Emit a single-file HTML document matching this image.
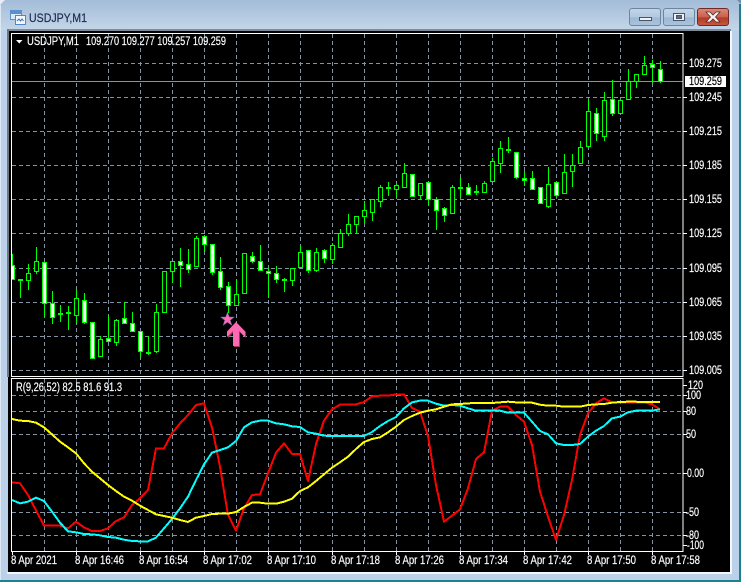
<!DOCTYPE html>
<html>
<head>
<meta charset="utf-8">
<title>USDJPY,M1</title>
<style>
html,body{margin:0;padding:0;width:741px;height:582px;overflow:hidden;background:#bad1e9}
svg{display:block;position:absolute;left:0;top:0}
text{font-family:"Liberation Sans",sans-serif;font-size:11.5px;fill:#fff;stroke:#fff;stroke-width:.18}
.g{fill:none;stroke:#8492a3;stroke-width:1;stroke-dasharray:4 3;shape-rendering:crispEdges}
.w{stroke:#fff;stroke-width:1;fill:none;shape-rendering:crispEdges}
.l{fill:none;stroke-width:2;stroke-linejoin:round;vector-effect:non-scaling-stroke;shape-rendering:crispEdges}
</style>
</head>
<body>
<svg width="741" height="582" viewBox="0 0 741 582" xmlns="http://www.w3.org/2000/svg">
<defs>
<linearGradient id="tb" x1="0" y1="0" x2="0" y2="1"><stop offset="0" stop-color="#a3bcd8"/><stop offset="1" stop-color="#c4d6e8"/></linearGradient>
<linearGradient id="bt" x1="0" y1="0" x2="0" y2="1"><stop offset="0" stop-color="#c3d6e8"/><stop offset=".5" stop-color="#b2c9e0"/><stop offset=".55" stop-color="#9db8d4"/><stop offset="1" stop-color="#aac4de"/></linearGradient>
<linearGradient id="rd" x1="0" y1="0" x2="0" y2="1"><stop offset="0" stop-color="#dc8a78"/><stop offset=".5" stop-color="#c8604c"/><stop offset=".55" stop-color="#b23a26"/><stop offset="1" stop-color="#c45a42"/></linearGradient>
</defs>
<!-- frame -->
<rect x="0" y="0" width="741" height="582" fill="#bad1e9"/>
<rect x="0" y="0" width="741" height="30" fill="url(#tb)"/>
<path d="M0 0h5L0 5z" fill="#e8eef4"/>
<path d="M741 0h-4l4 4z" fill="#6f8fa0"/>
<rect x="0" y="5" width="1" height="577" fill="#dce8f3"/>
<rect x="739" y="4" width="2" height="578" fill="#1f7f8d"/>
<rect x="0" y="580" width="741" height="2" fill="#1f8190"/>
<rect x="7" y="29" width="724" height="2" fill="#7f8b98"/>
<rect x="7" y="29" width="2" height="348" fill="#6e7680"/>
<rect x="9" y="31" width="721" height="541" fill="#000"/>
<rect x="8" y="377" width="1" height="195" fill="#000"/>
<rect x="7" y="572" width="724" height="2" fill="#f4f7fa"/>
<rect x="730" y="31" width="2" height="543" fill="#f4f7fa"/>
<!-- icon -->
<rect x="10.5" y="10.5" width="11" height="9" fill="#dceaf8" stroke="#5c8fcf"/>
<rect x="10.5" y="10.5" width="11" height="3" fill="#5c8fcf" stroke="#5c8fcf"/>
<rect x="15.5" y="15.5" width="10" height="9" fill="#f2f7fc" stroke="#4f86cc"/>
<path d="M17 21l2-2 1.500 2 1.500-2 1.500 2" fill="none" stroke="#3a6fb8"/>
<!-- title -->
<text x="29" y="22" textLength="58" lengthAdjust="spacingAndGlyphs" style="font-size:12px;fill:#1e2a52;stroke:#1e2a52;stroke-width:.2">USDJPY,M1</text>
<!-- buttons -->
<rect x="629.500" y="8.500" width="31" height="17" rx="2.500" fill="url(#bt)" stroke="#6f859e"/>
<rect x="663.500" y="8.500" width="31" height="17" rx="2.500" fill="url(#bt)" stroke="#6f859e"/>
<rect x="697.500" y="8.500" width="31" height="17" rx="2.500" fill="url(#rd)" stroke="#6e2a2a"/>
<rect x="639.500" y="17.500" width="12" height="3" fill="#eef2f6" stroke="#4a5464"/>
<rect x="673.500" y="13.500" width="11" height="7" fill="#eef2f6" stroke="#4a5464"/>
<rect x="676.500" y="15.500" width="5" height="3" fill="#5d7186" stroke="#4a5464"/>
<path d="M706 12h4l3 3 3-3h4l-4.500 5 4.500 5h-4l-3-3-3 3h-4l4.500-5z" fill="#f2f2f2" stroke="#5e2a26" stroke-width=".8"/>
<!-- main grid -->
<path class="g" d="M12 63.500H683M12 97.500H683M12 131.500H683M12 165.500H683M12 199.500H683M12 233.500H683M12 268.500H683M12 302.500H683M12 336.500H683M12 370.500H683"/>
<path class="g" d="M44.500 34V376M76.500 34V376M108.500 34V376M140.500 34V376M172.500 34V376M204.500 34V376M236.500 34V376M268.500 34V376M300.500 34V376M332.500 34V376M364.500 34V376M396.500 34V376M428.500 34V376M460.500 34V376M492.500 34V376M524.500 34V376M556.500 34V376M588.500 34V376M620.500 34V376M652.500 34V376"/>
<rect x="12" y="81" width="671" height="1" fill="#8593a3"/>
<!-- wicks -->
<path fill="none" stroke="#00ff00" stroke-width="1" shape-rendering="crispEdges" d="M12.500 254V279M20.500 280V298M28.500 264V290M36.500 247V274M44.500 262V317M52.500 291V324M60.500 305V322M68.500 306V330M76.500 290V324M84.500 293V324M100.500 336V357M108.500 315V342M116.500 319V346M124.500 302V323M132.500 312V331M140.500 331V358M148.500 336V355M156.500 304V353M164.500 271V313M172.500 261V283M180.500 248V287M188.500 249V273M196.500 236V266M204.500 235V252M212.500 244V275M220.500 257V290M228.500 282V313M236.500 280V306M252.500 252V263M260.500 245V270M268.500 268V298M276.500 266V283M284.500 278V292M292.500 268V286M300.500 245V267M308.500 250V273M316.500 248V272M324.500 249V263M332.500 243V264M340.500 229V248M348.500 214V236M356.500 216V233M364.500 201V223M372.500 199V221M380.500 185V207M388.500 182V196M396.500 183V197M404.500 163V187M412.500 174V197M420.500 183V200M428.500 181V205M436.500 197V230M444.500 207V222M452.500 185V213M460.500 177V198M468.500 183V194M476.500 185V195M484.500 181V192M492.500 158V181M500.500 141V173M508.500 137V153M516.500 152V179M524.500 171V186M532.500 171V189M548.500 167V208M556.500 182V197M564.500 154V193M572.500 154V187M580.500 141V163M588.500 100V146M596.500 108V141M604.500 92V141M612.500 80V116M628.500 69V99M636.500 74V88M644.500 56V75M652.500 60V83M660.500 61V83"/>
<!-- doji -->
<path fill="none" stroke="#00ff00" stroke-width="2" shape-rendering="crispEdges" d="M18 280h5M58 314h5M66 313h5M146 353h5M282 280h5M386 188h5M458 188h5M474 192h5M506 150h5"/>
<!-- hollow bodies -->
<path fill="#000" stroke="#00ff00" stroke-width="1" shape-rendering="crispEdges" d="M26.500 273.500h4V280.500h-4zM34.500 261.500h4V271.500h-4zM74.500 298.500h4V315.500h-4zM98.500 339.500h4V356.500h-4zM114.500 320.500h4V342.500h-4zM154.500 312.500h4V351.500h-4zM162.500 271.500h4V312.500h-4zM170.500 261.500h4V271.500h-4zM194.500 238.500h4V266.500h-4zM234.500 294.500h4V305.500h-4zM242.500 253.500h4V293.500h-4zM290.500 268.500h4V280.500h-4zM298.500 252.500h4V267.500h-4zM314.500 252.500h4V270.500h-4zM330.500 245.500h4V259.500h-4zM338.500 233.500h4V247.500h-4zM346.500 224.500h4V233.500h-4zM354.500 216.500h4V224.500h-4zM362.500 210.500h4V216.500h-4zM370.500 199.500h4V212.500h-4zM378.500 187.500h4V201.500h-4zM394.500 185.500h4V189.500h-4zM402.500 173.500h4V187.500h-4zM418.500 183.500h4V195.500h-4zM450.500 187.500h4V213.500h-4zM482.500 183.500h4V192.500h-4zM490.500 161.500h4V181.500h-4zM498.500 148.500h4V163.500h-4zM546.500 184.500h4V206.500h-4zM562.500 172.500h4V193.500h-4zM570.500 165.500h4V171.500h-4zM578.500 147.500h4V163.500h-4zM586.500 111.500h4V146.500h-4zM602.500 100.500h4V136.500h-4zM618.500 100.500h4V113.500h-4zM626.500 81.500h4V99.500h-4zM634.500 74.500h4V81.500h-4zM642.500 65.500h4V74.500h-4z"/>
<!-- filled bodies -->
<path fill="#fff" stroke="#00ff00" stroke-width="1" shape-rendering="crispEdges" d="M10.500 265.500h4V279.500h-4zM42.500 262.500h4V303.500h-4zM50.500 303.500h4V317.500h-4zM82.500 300.500h4V322.500h-4zM90.500 322.500h4V358.500h-4zM106.500 338.500h4V341.500h-4zM122.500 318.500h4V323.500h-4zM130.500 323.500h4V331.500h-4zM138.500 331.500h4V351.500h-4zM178.500 261.500h4V265.500h-4zM186.500 264.500h4V269.500h-4zM202.500 236.500h4V244.500h-4zM210.500 244.500h4V272.500h-4zM218.500 271.500h4V287.500h-4zM226.500 286.500h4V305.500h-4zM250.500 256.500h4V261.500h-4zM258.500 261.500h4V270.500h-4zM266.500 271.500h4V273.500h-4zM274.500 273.500h4V279.500h-4zM306.500 250.500h4V270.500h-4zM322.500 250.500h4V258.500h-4zM410.500 174.500h4V196.500h-4zM426.500 182.500h4V199.500h-4zM434.500 199.500h4V210.500h-4zM442.500 208.500h4V215.500h-4zM466.500 187.500h4V194.500h-4zM514.500 152.500h4V177.500h-4zM522.500 178.500h4V180.500h-4zM530.500 178.500h4V189.500h-4zM538.500 187.500h4V203.500h-4zM554.500 182.500h4V195.500h-4zM594.500 113.500h4V133.500h-4zM610.500 99.500h4V113.500h-4zM650.500 64.500h4V67.500h-4zM658.500 69.500h4V81.500h-4z"/>
<rect x="9" y="31" width="2" height="346" fill="#000"/>
<!-- star + arrow -->
<polygon points="227.500,312 229.300,317 234.500,317 230.300,320.200 232,325.500 227.500,322.300 223,325.500 224.700,320.200 220.500,317 225.700,317" fill="#ff69b4" stroke="#5a5a9a" stroke-width=".5"/>
<polygon points="237,323 246,332 246,338 240,332 240,347 234,347 234,332 228,338 228,332" fill="#a3324f"/>
<polygon points="236,322 245,331.500 245,337 239,331 239,346 233,346 233,331 227,337 227,331.500" fill="#ff69b4"/>
<!-- sub grid -->
<path class="g" d="M12 395.500H683M12 411.500H683M12 434.500H683M12 473.500H683M12 512.500H683M12 535.500H683"/>
<path class="g" d="M44.500 379V551M76.500 379V551M108.500 379V551M140.500 379V551M172.500 379V551M204.500 379V551M236.500 379V551M268.500 379V551M300.500 379V551M332.500 379V551M364.500 379V551M396.500 379V551M428.500 379V551M460.500 379V551M492.500 379V551M524.500 379V551M556.500 379V551M588.500 379V551M620.500 379V551M652.500 379V551"/>
<!-- indicators -->
<g transform="translate(0,370) scale(1,0.33333)">
<polyline class="l" stroke="#ff0000" points="12,337 20,340 28,375 44,467 60,467 68,475 76,455 84,472 92,483 100,483 108,475 116,453 124,442 132,405 140,385 148,360 156,235 164,235 172,190 180,160 188,135 196,105 204,100 212,172 220,290 228,435 236,482 244,415 252,375 260,373 268,310 276,248 284,220 292,252 300,252 308,333 316,222 324,152 332,118 340,104 348,103 356,103 364,96 372,79 380,77 388,77 396,73 404,73 412,114 420,125 428,198 436,345 444,455 452,437 460,418 468,355 476,267 484,247 492,122 500,110 508,110 516,135 524,155 532,225 540,365 548,440 556,510 564,435 572,330 580,195 588,130 596,100 604,85 612,97 620,97 628,97 636,97 644,97 652,103 660,118"/>
<polyline class="l" stroke="#00ffff" points="12,390 20,400 28,395 36,383 44,393 52,425 60,458 68,484 76,487 84,492 92,493 100,496 108,501 116,503 124,509 132,513 140,514 148,514 156,503 164,475 172,447 180,415 188,380 196,330 204,283 212,248 220,240 228,232 236,213 244,172 252,157 260,152 268,152 276,160 284,163 292,169 300,171 308,187 316,191 324,197 332,198 340,198 348,198 356,198 364,198 372,186 380,168 388,153 396,141 404,115 412,97 420,92 428,92 436,101 444,107 452,105 460,107 468,115 476,122 484,122 492,122 500,122 508,128 516,128 524,128 532,155 540,183 548,193 556,220 564,225 572,225 580,222 588,200 596,182 604,168 612,145 620,140 628,127 636,122 644,122 652,122 660,118"/>
<polyline class="l" stroke="#ffff00" points="12,147 20,152 28,153 36,158 44,172 52,193 60,215 68,232 76,250 84,280 92,305 100,325 108,345 116,363 124,380 132,392 140,407 148,420 156,433 164,438 172,443 180,450 188,456 196,443 204,438 212,432 220,431 228,431 236,426 244,411 252,398 260,398 268,401 276,401 284,395 292,386 300,363 308,352 316,333 324,313 332,293 340,277 348,260 356,237 364,216 372,207 380,202 388,187 396,170 404,150 412,138 420,128 428,122 436,118 444,110 452,103 460,102 468,100 476,99 492,99 500,97 508,95 516,97 524,97 532,98 540,104 548,107 556,107 564,110 572,110 580,110 588,105 596,103 604,102 612,98 620,96 628,95 660,96"/>
</g>
<!-- borders -->
<rect class="w" x="11.500" y="33.500" width="671.500" height="343"/>
<rect class="w" x="11.500" y="378.500" width="671.500" height="173"/>
<!-- price ticks -->
<path class="w" d="M683 63.500h4M683 97.500h4M683 131.500h4M683 165.500h4M683 199.500h4M683 233.500h4M683 268.500h4M683 302.500h4M683 336.500h4M683 370.500h4M683 385.500h4M683 395.500h4M683 411.500h4M683 434.500h4M683 473.500h4M683 512.500h4M683 535.500h4M683 545.500h4"/>
<path class="w" d="M12.500 551v4M76.500 551v4M140.500 551v4M204.500 551v4M268.500 551v4M332.500 551v4M396.500 551v4M460.500 551v4M524.500 551v4M588.500 551v4M652.500 551v4"/>
<!-- header texts -->
<polygon points="16,40 22.500,40 19.250,43.500" fill="#fff"/>
<text x="27" y="45" textLength="52" lengthAdjust="spacingAndGlyphs">USDJPY,M1</text>
<text x="86" y="45" textLength="140" lengthAdjust="spacingAndGlyphs">109.270 109.277 109.257 109.259</text>
<text x="16" y="391" textLength="106" lengthAdjust="spacingAndGlyphs">R(9,26,52) 82.5 81.6 91.3</text>
<!-- price labels -->
<text x="689" y="67" textLength="33" lengthAdjust="spacingAndGlyphs">109.275</text>
<text x="689" y="101" textLength="33" lengthAdjust="spacingAndGlyphs">109.245</text>
<text x="689" y="135" textLength="33" lengthAdjust="spacingAndGlyphs">109.215</text>
<text x="689" y="169" textLength="33" lengthAdjust="spacingAndGlyphs">109.185</text>
<text x="689" y="203" textLength="33" lengthAdjust="spacingAndGlyphs">109.155</text>
<text x="689" y="237" textLength="33" lengthAdjust="spacingAndGlyphs">109.125</text>
<text x="689" y="272" textLength="33" lengthAdjust="spacingAndGlyphs">109.095</text>
<text x="689" y="306" textLength="33" lengthAdjust="spacingAndGlyphs">109.065</text>
<text x="689" y="340" textLength="33" lengthAdjust="spacingAndGlyphs">109.035</text>
<text x="689" y="374" textLength="33" lengthAdjust="spacingAndGlyphs">109.005</text>
<rect x="685" y="76" width="41" height="11" fill="#fff"/>
<text x="689" y="85" textLength="33" lengthAdjust="spacingAndGlyphs" style="fill:#000;stroke:#000">109.259</text>
<!-- sub labels -->
<text x="688" y="389" textLength="15" lengthAdjust="spacingAndGlyphs">120</text>
<text x="686" y="399" textLength="15" lengthAdjust="spacingAndGlyphs">100</text>
<text x="686" y="415" textLength="10" lengthAdjust="spacingAndGlyphs">80</text>
<text x="686" y="438" textLength="10" lengthAdjust="spacingAndGlyphs">50</text>
<text x="687" y="477" textLength="17" lengthAdjust="spacingAndGlyphs">0.00</text>
<text x="686" y="516" textLength="13" lengthAdjust="spacingAndGlyphs">-50</text>
<text x="686" y="539" textLength="13" lengthAdjust="spacingAndGlyphs">-80</text>
<text x="687" y="549" textLength="17" lengthAdjust="spacingAndGlyphs">-100</text>
<!-- time labels -->
<text x="11" y="564" textLength="46" lengthAdjust="spacingAndGlyphs">8 Apr 2021</text>
<text x="75" y="564" textLength="49" lengthAdjust="spacingAndGlyphs">8 Apr 16:46</text>
<text x="139" y="564" textLength="49" lengthAdjust="spacingAndGlyphs">8 Apr 16:54</text>
<text x="203" y="564" textLength="49" lengthAdjust="spacingAndGlyphs">8 Apr 17:02</text>
<text x="267" y="564" textLength="49" lengthAdjust="spacingAndGlyphs">8 Apr 17:10</text>
<text x="331" y="564" textLength="49" lengthAdjust="spacingAndGlyphs">8 Apr 17:18</text>
<text x="395" y="564" textLength="49" lengthAdjust="spacingAndGlyphs">8 Apr 17:26</text>
<text x="459" y="564" textLength="49" lengthAdjust="spacingAndGlyphs">8 Apr 17:34</text>
<text x="523" y="564" textLength="49" lengthAdjust="spacingAndGlyphs">8 Apr 17:42</text>
<text x="587" y="564" textLength="49" lengthAdjust="spacingAndGlyphs">8 Apr 17:50</text>
<text x="651" y="564" textLength="49" lengthAdjust="spacingAndGlyphs">8 Apr 17:58</text>
</svg>
</body>
</html>
